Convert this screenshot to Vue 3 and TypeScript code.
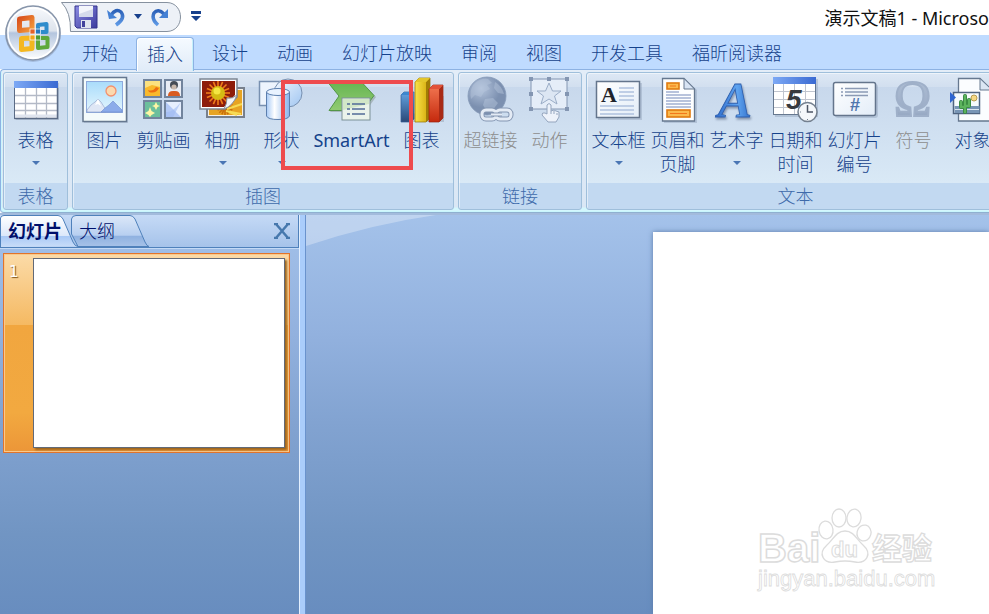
<script setup lang="ts">
import { ref } from 'vue'

interface Command {
  icon: string
  lines: string[]
  menu?: boolean
  disabled?: boolean
  wide?: boolean
}

interface Group {
  title: string
  commands: Command[]
  marked?: boolean
}

const tabs = ['开始', '插入', '设计', '动画', '幻灯片放映', '审阅', '视图', '开发工具', '福昕阅读器']
const activeTab = ref('插入')
const activePane = ref('slides')

const groups: Group[] = [
  { title: '表格', commands: [{ icon: 'table', lines: ['表格'], menu: true }] },
  {
    title: '插图',
    marked: true,
    commands: [
      { icon: 'picture', lines: ['图片'] },
      { icon: 'clipart', lines: ['剪贴画'] },
      { icon: 'album', lines: ['相册'], menu: true },
      { icon: 'shapes', lines: ['形状'], menu: true },
      { icon: 'smartart', lines: ['SmartArt'], wide: true },
      { icon: 'chart', lines: ['图表'] },
    ],
  },
  {
    title: '链接',
    commands: [
      { icon: 'link', lines: ['超链接'], disabled: true },
      { icon: 'action', lines: ['动作'], disabled: true },
    ],
  },
  {
    title: '文本',
    commands: [
      { icon: 'textbox', lines: ['文本框'], menu: true },
      { icon: 'header', lines: ['页眉和', '页脚'] },
      { icon: 'wordart', lines: ['艺术字'], menu: true },
      { icon: 'date', lines: ['日期和', '时间'] },
      { icon: 'number', lines: ['幻灯片', '编号'] },
      { icon: 'symbol', lines: ['符号'], disabled: true },
      { icon: 'object', lines: ['对象'] },
    ],
  },
]

const rays = (cx: number, cy: number, r: number, color: string): string =>
  Array.from({ length: 16 }, (_, i) => {
    const a = (i * Math.PI) / 8
    const x = (cx + r * Math.cos(a)).toFixed(1)
    const y = (cy + r * Math.sin(a)).toFixed(1)
    return `<path d="M${cx} ${cy}L${x} ${y}" stroke="${color}" stroke-width="1.6"/>`
  }).join('')

const icons: Record<string, string> = {
  table: `<rect x="4" y="7" width="43" height="37" fill="#8292ab" opacity=".35"/>
    <rect x="2.5" y="5.5" width="43" height="37" fill="#fff" stroke="#5b6b85"/>
    <rect x="2" y="5" width="44" height="7" fill="url(#gBlueBar)"/>
    <path d="M3 19.500H45M3 27.500H45M3 34.500H45M13.500 12V42M24.500 12V42M34.500 12V42" stroke="#b3b9c6" stroke-width="1.300"/>
    <path d="M3 40H45" stroke="#dfe4ee" stroke-width="3"/>
    <path d="M45.500 12V42.500H2.500" fill="none" stroke="#5b6b85" stroke-width="1.500"/>`,
  picture: `<rect x="3" y="3" width="44" height="44" fill="#8292ab" opacity=".35"/>
    <rect x="2" y="1.500" width="43.500" height="44" fill="#f4fbfb" stroke="#66788f" stroke-width="1.500"/>
    <rect x="5.500" y="5.500" width="36" height="31" fill="url(#gSky)" stroke="#8eaadd"/>
    <circle cx="30" cy="15" r="5" fill="#fbd9ae" stroke="#f3906c" stroke-width="1.300"/>
    <path d="M6 34L10 29L14 26L17 23L20 26L25 34V36H6Z" fill="#dfe7f5" stroke="#8ca0c8" stroke-width=".6"/>
    <path d="M20 36L24 32L28 29L32 25L36 29L41 34V36Z" fill="#8bacea" stroke="#6c8bcd" stroke-width=".6"/>
    <path d="M17 23L14 29L17 28L20 30Z" fill="#fff"/>`,
  clipart: `<g stroke="#72849d" stroke-width="2">
    <rect x="4" y="4" width="17" height="17" fill="#f9b92c"/><rect x="25" y="4" width="17" height="17" fill="#e9edf5"/>
    <rect x="4" y="25" width="17" height="17" fill="#6cbf9c"/><rect x="25" y="25" width="17" height="17" fill="#c5d7fb"/></g>
    <path d="M5 5H20V11L12 9L5 12Z" fill="#fbe180"/><path d="M8 14Q13 16 16 11L19 12Q16 18 9 16Z" fill="#ed6d12"/>
    <circle cx="34" cy="9" r="4" fill="#454c56"/><circle cx="34" cy="11" r="2.600" fill="#c9b8ac"/>
    <path d="M28 20Q28 15 33 15H35Q40 15 40 20Z" fill="#d95b20"/>
    <path d="M16 26L17.500 29L20 30L17.500 31L16 34L14.500 31L12 30L14.500 29ZM10 31L11.500 35L15 37L11.500 39L10 41L8.500 39L5 37L8.500 35Z" fill="#fdf6a6"/>
    <path d="M26 26L41 41H26Z" fill="#b3c9f6"/><path d="M26 26H41V41Z" fill="#e6effe"/><path d="M26 36Q32 37 41 26L33 41H26Z" fill="#9ebaf3" opacity=".6"/>`,
  album: `<rect x="8" y="12" width="37" height="29" fill="#e7a423" stroke="#77808d" stroke-width="2"/>
    <rect x="9.500" y="13.500" width="34" height="26" fill="none" stroke="#f5f0e6"/>
    ${rays(26, 31, 8, '#c96e0c')}<path d="M27 35L42 38M28 33L43 28M30 36L38 39" stroke="#f7db54" stroke-width="2"/>
    <path d="M1 3H38V21L26 33H1Z" fill="#fff" stroke="#7c8592" stroke-width="1.500"/>
    <path d="M3 5H36V19L25 31H3Z" fill="#8e1c0a"/>${rays(19, 17, 12, '#ef7c1a')}
    <circle cx="19" cy="17" r="7" fill="#d5bb14"/><circle cx="18" cy="15" r="3.500" fill="#f4e642"/>
    <path d="M38 19Q34 23 28 22Q28 28 25 33Q34 30 38 19Z" fill="#f3f5f8" stroke="#8a929e"/>`,
  shapes: `<rect x="1.500" y="5.500" width="30" height="24" fill="#edf4fd" stroke="#7890b0" stroke-width="1.500"/>
    <circle cx="30" cy="17" r="14" fill="url(#gDisc)" stroke="#7890b0"/>
    <path d="M8.500 16V40Q10 43.500 20 43.500T31.500 40V16" fill="url(#gCyl)" stroke="#5c7fae"/>
    <ellipse cx="20" cy="16" rx="11.500" ry="3.500" fill="#e9f3ff" stroke="#5c7fae"/>`,
  smartart: `<path d="M0 7H34L47 20L36 35H1L11 20Z" fill="#56664f" opacity=".3" transform="translate(1 1)"/>
    <path d="M0 6.500H34L46 19.500L35 34.500H1L11 20Z" fill="url(#gGreen)" stroke="#549648"/>
    <rect x="14" y="22" width="28" height="22" fill="#eaf3eb" stroke="#7d9298"/>
    <path d="M15 23H41V28L15 34Z" fill="#c7e1b9" opacity=".7"/>
    <path d="M19 28H22M24 28H37M19 33H22M24 33H37M19 38H22M24 38H37" stroke="#526c98" stroke-width="1.600"/>`,
  chart: `<path d="M5 46H46V20H40Z" fill="#7e8b9e" opacity=".35"/>
    <path d="M3 19L6 16H16V43L13 46H3Z" fill="url(#gBarBlue)" stroke="#315d96" stroke-width=".7"/>
    <path d="M3 19L6 16H16L13 19Z" fill="#3d87cf"/>
    <path d="M17 6L21 2H32V42L28 46H17Z" fill="url(#gBarYellow)" stroke="#917100" stroke-width=".7"/>
    <path d="M28 6L32 2V42L28 46Z" fill="#a07c05"/><path d="M17 6L21 2H32L28 6Z" fill="#e3c52a"/>
    <path d="M31 13L35 9H45V42L41 46H31Z" fill="url(#gBarRed)" stroke="#97200e" stroke-width=".7"/>
    <path d="M41 13L45 9V42L41 46Z" fill="#a82a16"/><path d="M31 13L35 9H45L41 13Z" fill="#e2533a"/>`,
  link: `<circle cx="20" cy="20" r="19" fill="url(#gGlobe)" stroke="#8599b8" stroke-width=".8"/>
    <path d="M7 8Q13 2 21 3L25 7L20 9L23 13L17 16L14 21L8 19L4 23Q2 14 7 8ZM28 6Q35 10 37 18L31 17L27 12ZM18 23L26 22L31 27L25 35L19 34L16 29Z" fill="#b9c8de" opacity=".45"/>
    <g fill="none" stroke="#8496b2" stroke-width="5"><rect x="15" y="34" width="14" height="9" rx="4"/><rect x="29" y="34" width="15" height="9" rx="4"/></g>
    <g fill="none" stroke="#e4ebf5" stroke-width="3"><rect x="15" y="34" width="14" height="9" rx="4"/><rect x="29" y="34" width="15" height="9" rx="4"/></g>
    <path d="M24 38.500H35" stroke="#8496b2" stroke-width="4"/><path d="M24 38.500H35" stroke="#e4ebf5" stroke-width="2"/>`,
  action: `<rect x="5" y="3" width="36" height="30" fill="#e5edf8" stroke="#8496b2"/>
    <path d="M23 7L26.500 15H35L28.500 20L31 28L23 23L15 28L17.500 20L11 15H19.500Z" fill="#dce6f3" stroke="#9badc7"/>
    <g fill="#8496b2"><path d="M3 1h4v4h-4zM21 1h4v4h-4zM39 1h4v4h-4zM3 16h4v4h-4zM39 16h4v4h-4zM3 31h4v4h-4zM39 31h4v4h-4z"/></g>
    <path d="M21 38V29Q23 26 25 29V35L28 34L30 35L33 36V41L30 46H22L16 39Q16 36 19 37Z" fill="#edf2fa" stroke="#94a5be"/>
    <path d="M25 35V38M28 35V38M31 37V39" stroke="#94a5be"/>`,
  textbox: `<rect x="3" y="7" width="44" height="37" fill="#8292ab" opacity=".35"/>
    <rect x="1.500" y="5.500" width="43" height="36" fill="url(#gPaper)" stroke="#64758c" stroke-width="1.500"/>
    <text x="6" y="26" font-family="Liberation Serif, serif" font-weight="700" font-size="22" fill="#20242c">A</text>
    <path d="M24 12H39M24 16H39M24 20H39M24 24H39M5 30H39M5 34H39M5 38H39" stroke="#afc1de" stroke-width="1.600"/>`,
  header: `<path d="M10 4H32L43 14V47H10Z" fill="#8292ab" opacity=".35"/>
    <path d="M8.500 2.500H30L40.500 13V45H8.500Z" fill="#fdfeff" stroke="#66788f" stroke-width="1.300"/>
    <path d="M30 2.500V13H40.500Z" fill="#d8e4f4" stroke="#66788f"/>
    <rect x="13" y="7" width="12" height="6" fill="#fbb94d" stroke="#e07b10" stroke-width="1.600"/>
    <rect x="13" y="34" width="23" height="7" fill="#fbb94d" stroke="#e07b10" stroke-width="1.600"/>
    <path d="M16 37.500H33M16 10H22" stroke="#f2761b"/>
    <path d="M12 16H25M12 19H37M12 22H37M12 25H37M12 28H37M12 31H37" stroke="#7488ba" stroke-width="1.200"/>`,
  wordart: `<text class="art" x="5" y="41" font-family="Liberation Serif, serif" font-style="italic" font-weight="700" font-size="51" fill="url(#gArt)" stroke="#2e5fae" stroke-width=".8">A</text>`,
  date: `<rect x="3" y="3" width="43" height="38" fill="#8292ab" opacity=".35"/>
    <rect x="1.500" y="1.500" width="42" height="37" fill="#fff" stroke="#66788f"/>
    <rect x="1" y="1" width="43" height="7" fill="url(#gBlueBar)"/>
    <path d="M2 15.500H43M2 23.500H43M2 31.500H43M11.500 8V38M33.500 8V38M22.500 8V38" stroke="#c0c5cf"/>
    <text x="14" y="33" font-family="Liberation Sans, sans-serif" font-weight="700" font-style="italic" font-size="28" fill="#36393f">5</text>
    <circle cx="35.500" cy="36" r="9.500" fill="#f4f7fa" stroke="#74808f" stroke-width="1.500"/>
    <path d="M35.500 29V36H41" fill="none" stroke="#4c5665" stroke-width="1.500"/>
    <path d="M35.500 43V44M28 36H29" stroke="#74808f"/>`,
  number: `<rect x="4" y="8" width="43" height="34" rx="3" fill="#8292ab" opacity=".35"/>
    <rect x="2.500" y="6.500" width="42" height="33" rx="2" fill="url(#gPaper)" stroke="#64758c" stroke-width="1.500"/>
    <path d="M10 12.500H12M14 12.500H37M10 16H12M14 16H37M10 19.500H12M14 19.500H37" stroke="#8b9ab5" stroke-width="1.400"/>
    <text x="19" y="35" font-family="Liberation Sans, sans-serif" font-weight="700" font-size="18" fill="#4f76ad">#</text>`,
  symbol: `<text x="4" y="39" font-family="Liberation Serif, serif" font-size="50" fill="url(#gOmega)" stroke="#9fb0c9" stroke-width="2">Ω</text>`,
  object: `<path d="M9.500 2.500H31L43 14V45H9.500Z" fill="#fbfdff" stroke="#66788f" stroke-width="1.300"/>
    <path d="M31 2.500V14H43Z" fill="#dbe6f4" stroke="#66788f"/>
    <rect x="4.500" y="16.500" width="26" height="21" fill="#f6fbfd" stroke="#4f6480" stroke-width="1.500"/>
    <rect x="5.500" y="30" width="25" height="7" fill="#7895b5"/><path d="M6 33.500H30" stroke="#dae6ef"/>
    <circle cx="25" cy="22" r="3" fill="#f5d884" stroke="#b79b51"/>
    <path d="M16 36V20M16 31H12V26M16 30H20V24" fill="none" stroke="#31813b" stroke-width="4" stroke-linecap="round" stroke-linejoin="round"/>
    <path d="M16 36V20M16 31H12V26M16 30H20V24" fill="none" stroke="#5cb35d" stroke-width="2.500" stroke-linecap="round"/>
    <path d="M1 16L7 21.500L1 27Z" fill="#2f66d0"/>`,
}
</script>

<template>
  <div class="app">
    <svg class="defs" aria-hidden="true">
      <defs>
        <linearGradient id="gBlueBar"><stop stop-color="#7da9f5" /><stop offset="1" stop-color="#3a6ad2" /></linearGradient>
        <linearGradient id="gSky" x2="0" y2="1"><stop stop-color="#a9dcfb" /><stop offset="1" stop-color="#e5f6fd" /></linearGradient>
        <linearGradient id="gDisc" x2="1" y2="1"><stop stop-color="#f4f9ff" /><stop offset="1" stop-color="#9fc5f1" /></linearGradient>
        <linearGradient id="gCyl"><stop stop-color="#a9cbf6" /><stop offset=".35" stop-color="#fff" /><stop offset="1" stop-color="#86b2ea" /></linearGradient>
        <linearGradient id="gGreen" x2="0" y2="1"><stop stop-color="#67b552" /><stop offset="1" stop-color="#91cb72" /></linearGradient>
        <linearGradient id="gBarBlue" x2="0" y2="1"><stop stop-color="#62a4e4" /><stop offset="1" stop-color="#2a4876" /></linearGradient>
        <linearGradient id="gBarYellow"><stop stop-color="#f9e34a" /><stop offset="1" stop-color="#d0a405" /></linearGradient>
        <linearGradient id="gBarRed" x2="0" y2="1"><stop stop-color="#f27752" /><stop offset="1" stop-color="#c5290d" /></linearGradient>
        <radialGradient id="gGlobe" cx=".35" cy=".3"><stop stop-color="#b4c4dc" /><stop offset="1" stop-color="#7c90b0" /></radialGradient>
        <linearGradient id="gPaper" x2="1" y2="1"><stop stop-color="#fff" /><stop offset="1" stop-color="#e3edf8" /></linearGradient>
        <linearGradient id="gArt"><stop stop-color="#2d6acb" /><stop offset=".6" stop-color="#5fa4f0" /><stop offset="1" stop-color="#2f6cc7" /></linearGradient>
        <linearGradient id="gOmega" x2="0" y2="1"><stop stop-color="#b3c2d8" /><stop offset="1" stop-color="#92a4bf" /></linearGradient>
        <linearGradient id="gSave" x2="1" y2="1"><stop stop-color="#8d8de4" /><stop offset="1" stop-color="#3b3b9e" /></linearGradient>
        <linearGradient id="gUndo" x2="0" y2="1"><stop stop-color="#2c61b8" /><stop offset="1" stop-color="#5f9ae6" /></linearGradient>
        <linearGradient id="gOrb" x2="0" y2="1">
          <stop stop-color="#f8fafd" /><stop offset=".46" stop-color="#dde3ec" /><stop offset=".5" stop-color="#b4c5de" /><stop offset="1" stop-color="#fff" />
        </linearGradient>
        <linearGradient id="gOrange" x2="1" y2="1"><stop stop-color="#d9501c" /><stop offset="1" stop-color="#f39a3b" /></linearGradient>
        <linearGradient id="gPaneOn" x2="0" y2="1">
          <stop stop-color="#fff" /><stop offset=".64" stop-color="#dce8fa" /><stop offset=".66" stop-color="#a9c9f6" /><stop offset="1" stop-color="#c9ddf8" />
        </linearGradient>
        <linearGradient id="gPaneOff" x2="0" y2="1">
          <stop stop-color="#dce8f9" /><stop offset=".64" stop-color="#b7cff0" /><stop offset=".66" stop-color="#8fb1e0" /><stop offset="1" stop-color="#a6c2e8" />
        </linearGradient>
      </defs>
    </svg>

    <header class="title-bar">
      <button class="orb" type="button" aria-label="Office">
        <svg width="58" height="58" viewBox="0 0 58 58">
          <circle cx="29" cy="30" r="28" fill="#6f82a0" opacity=".35" />
          <circle cx="29" cy="29" r="27" fill="url(#gOrb)" stroke="#8795aa" stroke-width="1.500" />
          <circle cx="29" cy="29" r="25" fill="none" stroke="#fff" stroke-width="1.500" />
          <g fill="none" stroke-linejoin="round">
            <path d="M15.500 15L28 13.500V25.500L15.500 26.500Z" stroke="url(#gOrange)" stroke-width="5" />
            <path d="M34 21L42.500 20V28H34Z" stroke="#2e8ccc" stroke-width="4" />
            <path d="M28 34V44.500L17.500 45.500V34.500Z" stroke="#f4b71f" stroke-width="5" />
            <path d="M34 34L43.500 34V43L34 44Z" stroke="#5ea83b" stroke-width="4" />
          </g>
          <g stroke="#fff" stroke-width=".7">
            <rect x="26" y="25" width="5" height="5" fill="#e2612a" /><rect x="31.500" y="25" width="5" height="5" fill="#2677be" />
            <rect x="26" y="31" width="5" height="5" fill="#f0a41b" /><rect x="31.500" y="31" width="5" height="5" fill="#4b9b35" />
          </g>
        </svg>
      </button>
      <div class="quick">
        <svg class="quick-shape" width="122" height="32" viewBox="0 0 122 32" aria-hidden="true">
          <path d="M0.500 2.500H106C124 3 124 31 106 31.500H9.500Q10 12 0.500 2.500Z" fill="#edf1f7" stroke="#86919f" />
        </svg>
        <button type="button" aria-label="保存">
          <svg width="24" height="24" viewBox="0 0 24 24">
            <path d="M1 1H23V23H3L1 21Z" fill="url(#gSave)" stroke="#34348c" />
            <rect x="5" y="1" width="14" height="11" fill="#f3f5fb" /><path d="M5 9L19 4V12H5Z" fill="#d5dbec" />
            <rect x="7" y="15" width="10" height="8" fill="#dfe3ef" /><rect x="8" y="16" width="3" height="6" fill="#41419c" />
          </svg>
        </button>
        <button type="button" aria-label="撤消">
          <svg width="20" height="20" viewBox="0 0 20 20">
            <path d="M5 8Q10 1 15 5Q20 11 10 18" fill="none" stroke="url(#gUndo)" stroke-width="3.500" />
            <path d="M1 3L3 12L11 11Z" fill="#4480d4" />
          </svg>
        </button>
        <button type="button" aria-label="撤消选项">
          <svg width="8" height="5" viewBox="0 0 8 5"><path d="M0 0H8L4 5Z" fill="#17408c" /></svg>
        </button>
        <button type="button" aria-label="重复">
          <svg width="20" height="20" viewBox="0 0 20 20">
            <path d="M14 7Q8 1 4 6Q1 12 8 18" fill="none" stroke="url(#gUndo)" stroke-width="3.500" />
            <path d="M18 2V11H9Z" fill="#4480d4" />
          </svg>
        </button>
        <button class="more" type="button" aria-label="自定义快速访问工具栏">
          <svg width="10" height="11" viewBox="0 0 10 11"><path d="M0 0H10V3H0ZM0 5H10L5 10Z" fill="#17408c" /></svg>
        </button>
      </div>
      <h1>演示文稿1 - Microso</h1>
    </header>

    <nav class="tabs">
      <button
        v-for="tab in tabs"
        :key="tab"
        type="button"
        :class="{ active: tab === activeTab }"
        @click="activeTab = tab"
      >{{ tab }}</button>
    </nav>

    <section class="ribbon">
      <div v-for="group in groups" :key="group.title" class="group">
        <div class="commands">
          <button
            v-for="cmd in group.commands"
            :key="cmd.icon"
            type="button"
            class="command"
            :class="{ wide: cmd.wide }"
            :disabled="cmd.disabled"
          >
            <svg width="48" height="48" viewBox="0 0 48 48" aria-hidden="true" v-html="icons[cmd.icon]"></svg>
            <span v-for="line in cmd.lines" :key="line" class="line">{{ line }}</span>
            <span v-if="cmd.menu" class="arrow"></span>
          </button>
        </div>
        <div class="group-title">{{ group.title }}</div>
        <div v-if="group.marked" class="marker"></div>
      </div>
    </section>

    <main class="workspace">
      <aside class="pane">
        <div class="pane-head">
          <button type="button" class="pane-tab first" @click="activePane = 'slides'">
            <svg width="78" height="32" viewBox="0 0 78 32" aria-hidden="true">
              <path d="M0.500 32V3Q1 0.500 4 0.500H58Q61 0.500 63 4L73 27Q75 31.500 78 31.500" fill="url(#gPaneOn)" stroke="#4f81bb" />
            </svg>
            <span>幻灯片</span>
          </button>
          <button type="button" class="pane-tab second" @click="activePane = 'outline'">
            <svg width="78" height="32" viewBox="0 0 78 32" aria-hidden="true">
              <path d="M0.500 19V4Q1 0.500 5 0.500H59Q62 0.500 64 4L74 27Q76 31.500 78 31.500H7Z" fill="url(#gPaneOff)" stroke="#4f81bb" />
            </svg>
            <span>大纲</span>
          </button>
          <button type="button" class="close" aria-label="关闭">
            <svg width="16" height="16" viewBox="0 0 16 16">
              <path d="M0 1H4M12 1H16M0 15H4M12 15H16M2 1L14 15M14 1L2 15" fill="none" stroke="#4678ad" stroke-width="2.500" />
            </svg>
          </button>
        </div>
        <div class="thumb">
          <span class="index">1</span>
          <div class="preview"></div>
        </div>
      </aside>
      <div class="splitter"></div>
      <section class="editor">
        <svg class="sheen" width="130" height="32" viewBox="0 0 130 32" aria-hidden="true">
          <path d="M0 0H130Q66 9 0 31Z" fill="#fff" opacity=".3" />
        </svg>
        <div class="slide">
          <svg class="watermark" width="190" height="96" viewBox="0 0 190 96">
            <g fill="#fff" stroke="#dcdcdc">
              <text x="5" y="61" font-family="Liberation Sans, sans-serif" font-weight="700" font-size="40" stroke-width="1.500">Bai</text>
              <g transform="translate(0 -5)" stroke-width="1.300">
                <ellipse cx="73" cy="34" rx="7" ry="9" transform="rotate(-8 73 34)" />
                <ellipse cx="86" cy="22" rx="7" ry="9" />
                <ellipse cx="101" cy="22" rx="7" ry="9" transform="rotate(8 101 22)" />
                <ellipse cx="111" cy="37" rx="7" ry="8" transform="rotate(14 111 37)" />
                <path d="M92 35C83 35 80 44 74 49C64 58 71 68 82 66Q92 64 102 66C113 68 120 58 110 49C104 44 101 35 92 35Z" />
              </g>
              <text x="78" y="56" font-family="Liberation Sans, sans-serif" font-weight="700" font-size="22">du</text>
              <text x="119" y="58" font-family="Noto Sans CJK SC, sans-serif" font-weight="700" font-size="30" stroke-width="1.300">经验</text>
              <text x="5" y="85" font-family="Liberation Sans, sans-serif" font-size="22" stroke-width=".8">jingyan.baidu.com</text>
            </g>
          </svg>
        </div>
      </section>
    </main>
  </div>
</template>

<style>
body {
  overflow: hidden;
}
</style>

<style scoped>
.app {
  display: flex;
  flex-direction: column;
  height: 100vh;
  overflow: hidden;
  background: #fff;
  color: #15428b;
  font: 18px/24px "Noto Sans", "Noto Sans CJK SC", sans-serif;
}
button {
  padding: 0;
  border: 0;
  background: none;
  color: inherit;
  font: inherit;
}
svg {
  display: block;
}
.defs {
  position: absolute;
  width: 0;
  height: 0;
}
.title-bar {
  position: relative;
  flex: none;
  display: flex;
  height: 35px;
  padding-left: 61px;
}
.orb {
  position: absolute;
  z-index: 2;
  left: 4px;
  top: 4px;
}
.quick {
  position: relative;
  display: flex;
  align-items: center;
  gap: 8px;
  height: 33px;
  padding-left: 13px;
}
.quick button {
  position: relative;
}
.quick-shape {
  position: absolute;
  left: 0;
  top: 0;
}
.quick .more {
  margin-left: 13px;
}
h1 {
  margin: 0 0 0 auto;
  color: #111;
  font-size: 18px;
  font-weight: 400;
  line-height: 36px;
  white-space: nowrap;
}
.tabs {
  flex: none;
  display: flex;
  gap: 7px;
  height: 34px;
  padding: 2px 0 0 71px;
  background: #bfdbff;
  box-sizing: border-box;
}
.tabs button {
  padding: 0 10px;
  border: 1px solid transparent;
  border-bottom: 0;
  border-radius: 4px 4px 0 0;
  font-weight: 300;
  line-height: 31px;
  white-space: nowrap;
}
.tabs .active {
  position: relative;
  z-index: 1;
  height: 34px;
  border-color: #8db2e3;
  background: linear-gradient(#f5faff, #e0ebf8);
  box-shadow: inset 1px 1px #fff, inset -1px 0 #c5f0fa;
}
.ribbon {
  flex: none;
  display: flex;
  gap: 4px;
  box-sizing: border-box;
  height: 144px;
  padding: 2px 0 3px 2px;
  border: 1px solid #8db2e3;
  border-right: 0;
  border-bottom-color: #8fb0d0;
  border-radius: 4px 0 0 4px;
  background: linear-gradient(#e3edf8, #dae7f5 137px, #d4f7fd 138px);
  box-shadow: inset 1px -1px #c9f6fd;
}
.group {
  position: relative;
  flex: none;
  display: flex;
  flex-direction: column;
  box-sizing: border-box;
  height: 138px;
  border: 1px solid #9fbfdb;
  border-radius: 3px;
  background: linear-gradient(#dde8f5, #d2dfef 14px, #c8d8ec 14px, #d9e9f6 110px, #c2d9f1 110px);
  box-shadow: inset 1px 1px rgba(255, 255, 255, 0.5);
}
.commands {
  flex: 1;
  display: flex;
  padding: 3px 2px 0;
}
.command {
  display: flex;
  flex-direction: column;
  align-items: center;
  width: 59px;
  font-weight: 300;
  white-space: nowrap;
}
.wide {
  width: 81px;
  font-weight: 400;
}
.command svg {
  margin-bottom: 4px;
  overflow: visible;
}
.command :deep(.art) {
  filter: drop-shadow(1px 2px 1px #8292ab);
}
.line {
  height: 24px;
}
.command:disabled {
  color: #8d8d8d;
}
.arrow {
  margin-top: 9px;
  border: 4px solid transparent;
  border-top-color: #4a76b4;
  border-bottom: 0;
}
.group-title {
  height: 26px;
  color: #3e6aaa;
  font-weight: 300;
  line-height: 27px;
  text-align: center;
}
.marker {
  position: absolute;
  left: 208px;
  top: 7px;
  width: 124px;
  height: 82px;
  border: 4px solid #ee4b4e;
}
.workspace {
  flex: 1;
  display: flex;
  min-height: 0;
  border-top: 2px solid #a3bbdc;
  background: linear-gradient(#a4c2ea, #92b1de 30%, #82a3d1 52%, #7195c3 80%, #688dbf);
}
.pane {
  width: 299px;
}
.pane-head {
  display: flex;
  align-items: center;
  box-sizing: border-box;
  height: 33px;
  border: 1px solid #4f81bb;
  border-width: 0 1px 1px 0;
  background: linear-gradient(#c5daf6, #a6c3ea);
  box-shadow: 0 1px #c4daf6;
}
.pane-tab {
  position: relative;
  width: 71px;
  height: 32px;
  padding-left: 8px;
  color: #000f6b;
  text-align: left;
}
.pane-tab svg {
  position: absolute;
  left: 0;
  top: 0;
}
.pane-tab span {
  position: relative;
}
.first {
  z-index: 1;
  font-weight: 700;
}
.second {
  font-weight: 300;
}
.close {
  margin-left: auto;
  margin-right: 8px;
}
.thumb {
  display: flex;
  box-sizing: border-box;
  width: 287px;
  height: 200px;
  margin: 5px 0 0 3px;
  padding: 4px 4px 4px 0;
  border: 1px solid #e2742a;
  background: linear-gradient(#fbdba8, #f5b962 36%, #f1a63f 36%, #f2a940 80%, #ec9638);
  box-shadow: inset 0 0 0 1px #f9c98b;
}
.index {
  width: 29px;
  padding-left: 5px;
  box-sizing: border-box;
  color: #fff;
  font-family: "DejaVu Sans", sans-serif;
  font-size: 15px;
  line-height: 28px;
  text-shadow: 1px 1px 1px #80551c;
}
.preview {
  flex: 1;
  border: 1px solid #626a78;
  background: #fff;
  box-shadow: 2px 2px 2px #9d651c;
}
.splitter {
  flex: none;
  width: 5px;
  border-left: 1px solid #e3effe;
  border-right: 1px solid #6a93cd;
  background: #aacdfb;
}
.editor {
  position: relative;
  flex: 1;
  display: flex;
  padding: 17px 0 0 347px;
}
.sheen {
  position: absolute;
  left: 0;
  top: 0;
}
.slide {
  position: relative;
  flex: 1;
  background: #fff;
  box-shadow: 0 0 5px #5c7ba8;
}
.watermark {
  position: absolute;
  left: 100px;
  top: 269px;
}
</style>
